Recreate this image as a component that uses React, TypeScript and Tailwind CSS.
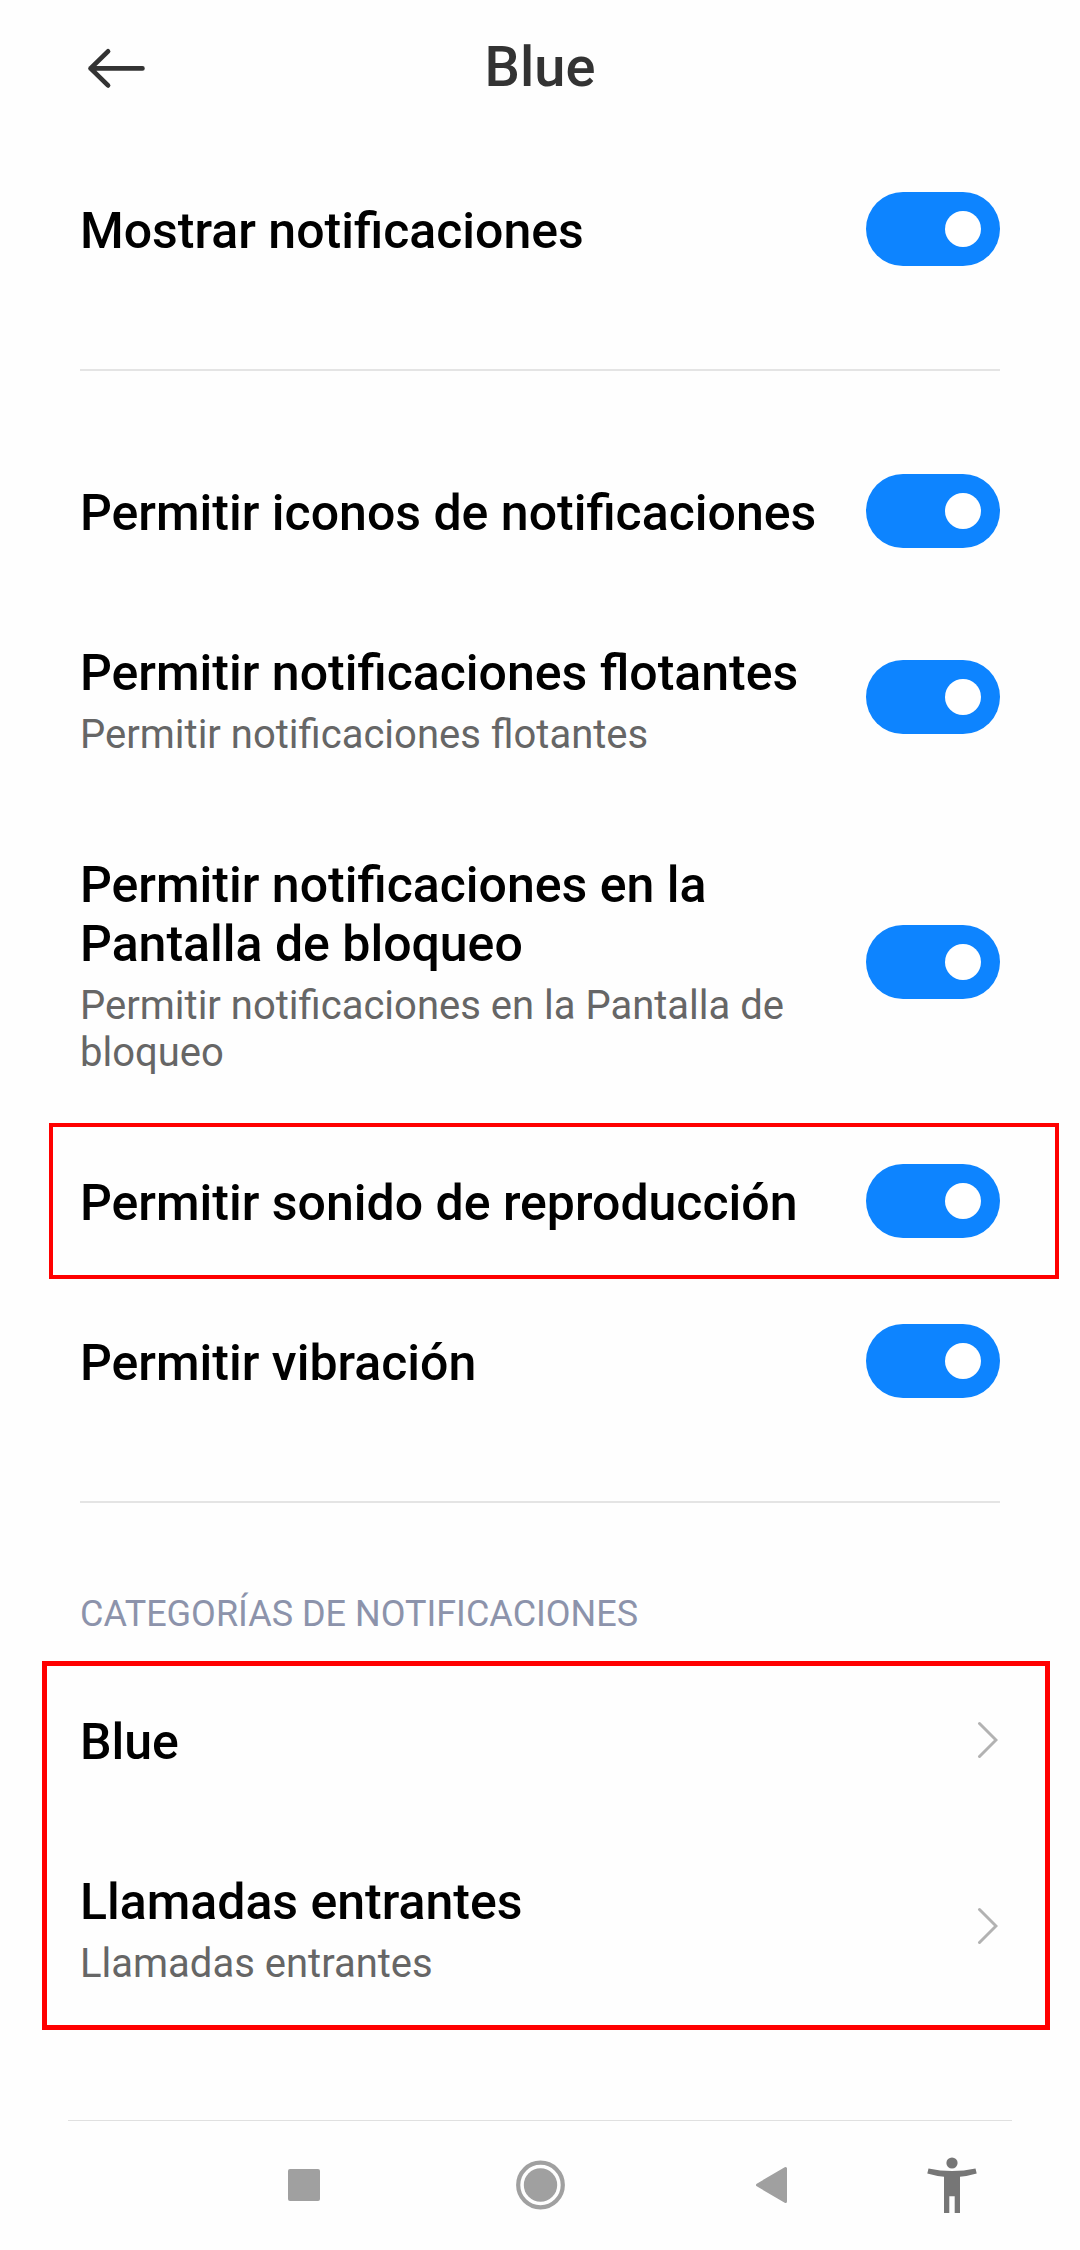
import { useId, useState } from 'react'

interface SwitchRowProps {
  title: string
  summary?: string
  highlighted?: boolean
}

interface CategoryRowProps {
  title: string
  summary?: string
}

const PERMISSIONS: SwitchRowProps[] = [
  { title: 'Permitir iconos de notificaciones' },
  {
    title: 'Permitir notificaciones flotantes',
    summary: 'Permitir notificaciones flotantes',
  },
  {
    title: 'Permitir notificaciones en la Pantalla de bloqueo',
    summary: 'Permitir notificaciones en la Pantalla de bloqueo',
  },
  { title: 'Permitir sonido de reproducción', highlighted: true },
  { title: 'Permitir vibración' },
]

const CATEGORIES: CategoryRowProps[] = [
  { title: 'Blue' },
  { title: 'Llamadas entrantes', summary: 'Llamadas entrantes' },
]

function RowText({ title, summary }: CategoryRowProps) {
  return (
    <>
      <span className="block text-[50px] leading-[59px] font-medium text-black">
        {title}
      </span>
      {summary ? (
        <span className="mt-2 block text-[40px] leading-[47px] text-[#666666]">
          {summary}
        </span>
      ) : null}
    </>
  )
}

function SwitchRow({ title, summary, highlighted }: SwitchRowProps) {
  const id = useId()
  const [checked, setChecked] = useState(true)

  return (
    <div className="relative flex items-center gap-10">
      <label
        htmlFor={id}
        className={
          summary ? 'flex-1 pt-[53px] pb-[45px]' : 'flex-1 pt-[53px] pb-12'
        }
      >
        <RowText title={title} summary={summary} />
      </label>
      <input
        id={id}
        type="checkbox"
        role="switch"
        checked={checked}
        onChange={(event) => setChecked(event.target.checked)}
        className="flex h-[74px] w-[134px] shrink-0 cursor-pointer appearance-none items-center justify-start rounded-full bg-[#d9d9d9] px-[19px] before:size-9 before:rounded-full before:bg-white checked:justify-end checked:bg-[#0d84ff]"
      />
      {highlighted ? (
        <div className="pointer-events-none absolute top-0.5 -right-[59px] bottom-0.5 -left-[31px] border-4 border-[#ff0000]" />
      ) : null}
    </div>
  )
}

function CategoryRow({ title, summary }: CategoryRowProps) {
  return (
    <a href="#" className="flex items-center gap-10 pr-0.5">
      <span
        className={
          summary ? 'flex-1 pt-[53px] pb-[45px]' : 'flex-1 pt-[53px] pb-12'
        }
      >
        <RowText title={title} summary={summary} />
      </span>
      <svg
        width="21"
        height="38"
        viewBox="0 0 21 38"
        fill="none"
        stroke="#b2b2b2"
        strokeWidth="3"
        strokeLinecap="round"
        aria-hidden
      >
        <path d="M2.5 2.5 19 19 2.5 35.5" />
      </svg>
    </a>
  )
}

function NavigationBar() {
  return (
    <nav className="mt-auto">
      <div className="mx-[68px] h-px bg-[#e0e0e0]" />
      <div className="grid grid-cols-[236fr_236fr_226fr_136fr] place-items-center pt-9 pr-[60px] pb-[37px] pl-[186px]">
        <button type="button" aria-label="Recientes">
          <svg width="56" height="56" viewBox="0 0 56 56" fill="#a0a0a0">
            <rect x="12" y="12" width="32" height="32" rx="2" />
          </svg>
        </button>
        <button type="button" aria-label="Inicio">
          <svg width="56" height="56" viewBox="0 0 56 56" fill="#a0a0a0">
            <circle cx="28.5" cy="28" r="16.7" />
            <circle
              cx="28.5"
              cy="28"
              r="22.3"
              fill="none"
              stroke="#a0a0a0"
              strokeWidth="4.2"
            />
          </svg>
        </button>
        <button type="button" aria-label="Atrás">
          <svg
            width="56"
            height="56"
            viewBox="0 0 56 56"
            fill="#a0a0a0"
            stroke="#a0a0a0"
            strokeWidth="3"
            strokeLinejoin="round"
          >
            <path d="M14.5 28 42.5 11.5v33Z" />
          </svg>
        </button>
        <button type="button" aria-label="Accesibilidad">
          <svg width="56" height="56" viewBox="0 0 56 56" fill="#767676">
            <circle cx="28" cy="6" r="5.6" />
            <path d="M4.5 11.4Q28 16.6 51.5 11.4L52.7 16.6Q44 19.2 36 19.7V56H30.7V39.3H25.3V56H20V19.7Q12 19.2 3.3 16.6Z" />
          </svg>
        </button>
      </div>
    </nav>
  )
}

export default function App() {
  return (
    <div className="flex min-h-screen flex-col bg-[#fefefe] font-['Roboto',sans-serif]">
      <header className="mb-[15px] grid grid-cols-[1fr_auto_1fr] items-center px-20 py-[34px]">
        <button type="button" aria-label="Volver" className="justify-self-start">
          <svg
            width="72"
            height="44"
            viewBox="0 0 72 44"
            fill="none"
            stroke="#333333"
            strokeWidth="4.8"
            strokeLinecap="round"
            strokeLinejoin="round"
          >
            <path d="M28 6.4 10.6 23.4 28 40.4M10.6 23.4H62.4" />
          </svg>
        </button>
        <h1 className="text-[56px] leading-[66px] font-medium text-[#333333]">
          Blue
        </h1>
      </header>

      <main className="px-20">
        <SwitchRow title="Mostrar notificaciones" />

        <hr className="my-[60px] border-t-2 border-[#e4e4e4]" />

        {PERMISSIONS.map((permission) => (
          <SwitchRow key={permission.title} {...permission} />
        ))}

        <hr className="mt-[60px] border-t-2 border-[#e4e4e4]" />

        <h2 className="pt-[90px] pb-[25px] text-[36px] leading-[42px] text-[#8c93ab]">
          CATEGORÍAS DE NOTIFICACIONES
        </h2>

        <section className="relative">
          {CATEGORIES.map((category) => (
            <CategoryRow key={category.title} {...category} />
          ))}
          <div className="pointer-events-none absolute top-px -right-[50px] bottom-0.5 -left-[38px] border-5 border-[#ff0000]" />
        </section>
      </main>

      <NavigationBar />
    </div>
  )
}
